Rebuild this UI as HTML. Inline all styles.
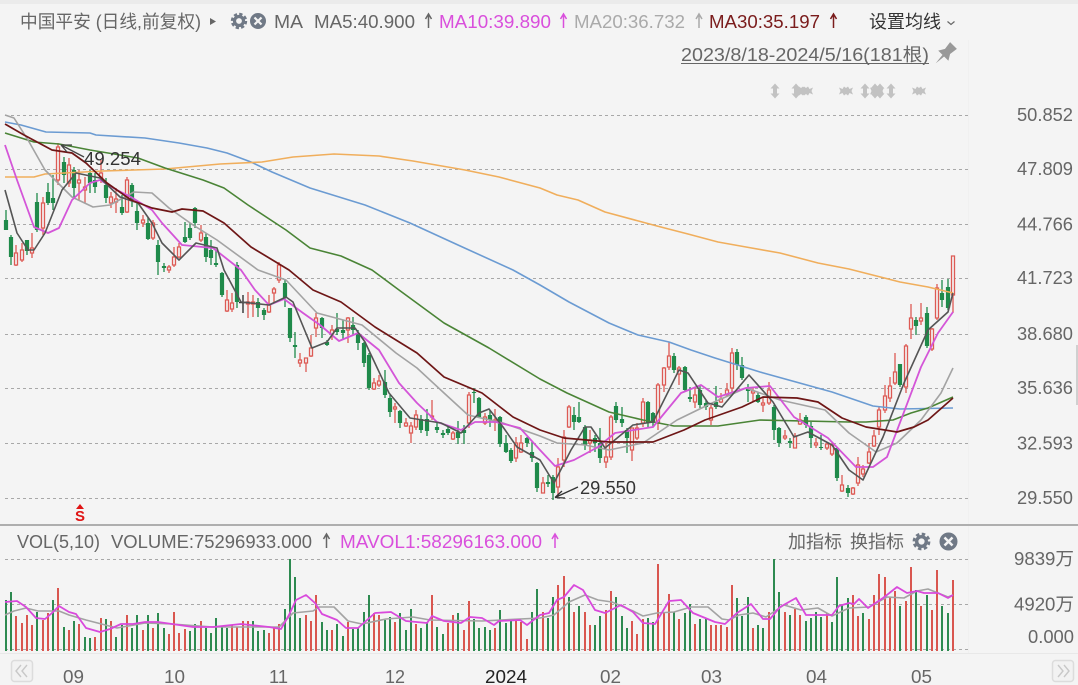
<!DOCTYPE html>
<html lang="zh">
<head>
<meta charset="utf-8">
<title>中国平安</title>
<style>
html,body{margin:0;padding:0;width:1078px;height:685px;overflow:hidden;background:#f4f4f4}
svg{display:block;filter:blur(.3px)}
text{font-family:"Liberation Sans","Noto Sans CJK SC",sans-serif;font-size:18px;fill:#666}
</style>
</head>
<body>
<svg width="1078" height="685" viewBox="0 0 1078 685" xmlns="http://www.w3.org/2000/svg">
<defs>
<path id="ar" d="M0-7.500L4.500-2.500H2V2.500H4.500L0 7.500L-4.500 2.500H-2V-2.500H-4.500Z" fill="#c2c2c2"/>
<path id="bg" d="M-7-3.500L-3.500-2L-2-4.500L0-3L2-4.500L3.500-2L7-3.500L5.500 0L7 3.500L3.500 2L2 4.500L0 3L-2 4.500L-3.500 2L-7 3.500L-5.500 0Z" fill="#c2c2c2"/>
</defs>
<rect width="1078" height="685" fill="#f4f4f4"/>
<rect width="1078" height="4" fill="#ebebeb"/>
<rect x="968" y="40" width="1" height="614" fill="#f0f0f0"/>
<rect y="653" width="1078" height="1" fill="#e8e8e8"/>
<rect y="524" width="1078" height="2" fill="#aeaeae"/>
<rect x="1076" y="345" width="2" height="60" fill="#d0d0d0"/>

<!-- grid -->
<path d="M5 115.500H968M5 169.500H968M5 224.500H968M5 278.500H968M5 334.500H968M5 388.500H968M5 443.500H968M5 498.500H968M5 559.500H968M5 604.500H968M5 649.500H968" stroke="#a8a8a8" stroke-width="1" stroke-dasharray="3 3" fill="none"/>

<!-- candles green -->
<path fill="none" stroke="#1f8a4a" stroke-width="1.300" d="M6 210V230M11 235V265M27 240V255M37 193V232M48 183V205M53 175V210M64 157V183M74 167V197M90 170V193M95 173V193M106 178V203M122 195V215M132 183V207M137 203V230M148 217V240M158 240V275M164 263V272M185 222V243M190 223V240M195 207V228M206 233V262M211 240V265M216 250V267M222 272V297M237 262V308M258 298V317M264 308V320M285 280V307M290 308V342M295 332V358M322 317V338M327 340V346M337 313V335M343 320V340M353 317V335M358 330V350M364 342V367M369 353V390M385 370V398M390 395V417M400 410V428M421 415V433M427 409V436M437 422V433M443 430V438M448 427V435M458 421V444M464 425V444M474 388V403M479 397V418M490 410V427M500 416V447M506 435V453M511 448V463M527 437V447M532 442V462M537 462V492M548 475V487M553 475V500M574 407V430M579 402V423M585 425V450M595 435V452M600 428V463M616 402V423M622 407V427M627 428V453M648 401V427M653 412V427M674 353V373M685 366V391M690 387V402M700 385V408M706 400V410M716 386V409M737 349V370M742 357V380M748 384V402M758 392V403M774 405V440M779 427V447M790 438V448M806 415V428M811 422V448M821 435V450M837 447V481M848 485V497M900 364V387M916 317V335M927 307V348M942 280V307M948 279V310"/>
<path fill="none" stroke="#1f8a4a" stroke-width="4.200" d="M6 220V230M11 237V257M27 240V251M37 202V230M48 192V203M53 198V203M64 162V175M74 170V188M90 173V183M95 180V187M106 185V198M122 207V213M132 185V200M137 211V223M148 223V239M158 245V262M164 266V268M185 237V242M190 228V238M195 208V223M206 237V257M211 250V258M216 263V265M222 273V295M237 265V302M258 302V308M264 310V315M285 283V298M290 308V338M295 345V347M322 318V328M327 342V345M337 329V332M343 330V333M353 325V330M358 333V343M364 343V363M369 355V388M385 382V395M390 398V412M400 411V423M421 419V430M427 419V431M437 427V430M443 433V435M448 429V433M458 432V438M464 430V433M474 392V393M479 398V417M490 415V420M500 417V444M506 443V452M511 450V461M527 438V443M532 452V458M537 463V488M548 482V484M553 477V493M574 415V422M579 417V422M585 427V445M595 438V443M600 443V458M616 406V420M622 419V423M627 430V438M648 402V423M653 413V423M674 356V370M685 367V390M690 397V399M700 390V405M706 403V407M716 402V407M737 352V365M742 365V378M748 388V391M758 395V402M774 407V430M779 428V443M790 441V443M806 417V425M811 426V438M821 447V448M837 448V478M848 488V493M900 364V385M916 320V326M927 313V346M942 293V300M948 287V308"/>

<!-- candles red -->
<path fill="none" stroke="#dd5a54" stroke-width="1.300" d="M16 245V266M22 243V262M32 233V258M43 197V235M58 143V185M69 158V187M79 170V200M85 177V203M101 160V183M111 192V208M116 188V213M127 177V213M143 215V227M153 220V240M169 265V273M174 247V267M179 243V258M201 225V242M227 290V312M232 293V312M248 292V318M253 295V317M269 295V313M274 287V303M279 262V283M300 353V367M306 358V372M311 335V357M316 313V337M332 325V340M348 317V343M374 378V390M379 375V387M395 403V423M406 418V427M411 422V443M416 410V430M432 400V420M453 431V440M469 392V428M485 413V425M495 409V431M516 437V462M521 435V453M543 477V493M558 458V497M564 430V467M569 405V428M590 430V453M606 443V468M611 415V460M632 428V461M637 423V440M643 398V427M658 383V430M664 367V392M669 342V370M679 366V385M695 388V408M711 405V425M721 393V403M727 383V397M732 348V395M753 387V402M763 398V412M769 382V405M785 430V440M795 433V448M800 413V425M816 438V448M827 442V450M832 443V456M842 475V492M853 487V495M858 457V486M863 465V477M869 443V464M874 430V447M879 407V435M885 385V413M890 377V402M895 353V385M906 344V393M911 304V339M921 303V325M932 328V351M937 284V320M953 256V313"/>
<path transform="translate(.5 0)" fill="#f4f4f4" stroke="#dd5a54" stroke-width="1.300" d="M14 253h3v12h-3zM20 250h3v10h-3zM30 248h3v5h-3zM41 203h3v25h-3zM56 147h3v33h-3zM67 165h3v18h-3zM77 180h3v3h-3zM83 187h3v3h-3zM99 173h3v5h-3zM109 197h3v6h-3zM114 199h3v3h-3zM125 180h3v32h-3zM141 220h3v3h-3zM151 223h3v15h-3zM167 267h3v3h-3zM172 257h3v8h-3zM177 247h3v10h-3zM199 233h3v7h-3zM225 300h3v11h-3zM230 303h3v6h-3zM246 302h3v2h-3zM251 302h3v2h-3zM267 305h3v7h-3zM272 289h3v4h-3zM277 265h3v15h-3zM298 360h3v3h-3zM304 358h3v5h-3zM309 348h3v8h-3zM314 318h3v10h-3zM330 330h3v4h-3zM346 318h3v12h-3zM372 383h3v6h-3zM377 381h3v4h-3zM393 407h3v2h-3zM404 423h3v3h-3zM409 426h3v7h-3zM414 415h3v12h-3zM430 416h3v1h-3zM451 433h3v6h-3zM467 395h3v28h-3zM483 417h3v6h-3zM493 420h3v2h-3zM514 443h3v15h-3zM519 443h3v9h-3zM541 483h3v10h-3zM556 467h3v20h-3zM562 437h3v23h-3zM567 407h3v20h-3zM588 440h3v3h-3zM604 457h3v5h-3zM609 417h3v40h-3zM630 428h3v22h-3zM635 428h3v10h-3zM641 402h3v21h-3zM656 385h3v38h-3zM662 368h3v17h-3zM667 356h3v11h-3zM677 368h3v6h-3zM693 395h3v7h-3zM709 408h3v12h-3zM719 399h3v3h-3zM725 390h3v5h-3zM730 353h3v35h-3zM751 391h3v2h-3zM761 403h3v2h-3zM767 390h3v13h-3zM783 436h3v2h-3zM793 436h3v12h-3zM798 420h3v4h-3zM814 443h3v2h-3zM825 444h3v4h-3zM830 445h3v9h-3zM840 485h3v6h-3zM851 488h3v6h-3zM856 465h3v18h-3zM861 469h3v5h-3zM867 452h3v11h-3zM872 436h3v10h-3zM877 410h3v17h-3zM883 396h3v14h-3zM888 386h3v12h-3zM893 372h3v11h-3zM904 346h3v41h-3zM909 318h3v11h-3zM919 318h3v3h-3zM930 329h3v20h-3zM935 288h3v30h-3zM951 256h3v39h-3z"/>
<path d="M239 302.500H249M243 295V313" stroke="#333" stroke-width="1.400" fill="none"/>

<!-- price MA lines -->
<g fill="none" stroke-width="1.600" stroke-linejoin="round">
<polyline stroke="#6b9bd2" points="5,122 21,125 46,132 90,133 96,135 145,138 179,143 207,148 227,153 251,162 272,172 310,188 365,205 410,223 458,245 513,270 540,285 569,302 609,323 638,335 669,342 691,350 715,358 760,372 832,392 873,406 900,409 953,408"/>
<polyline stroke="#f0ae5c" points="5,177 34,177 45,174 103,171 165,169 220,164 262,162 293,157 334,154 379,156 413,161 465,170 499,177 540,188 557,195 578,200 605,212 657,226 688,234 718,242 746,247 780,253 818,263 849,269 900,282 928,287 953,293"/>
<polyline stroke="#4a8436" points="5,133 34,142 59,144 90,150 138,158 165,168 203,180 224,188 248,205 286,230 310,248 341,256 372,270 399,290 444,323 489,348 540,379 567,393 609,412 643,420 674,426 718,426 760,420 849,422 866,422 893,420 911,413 928,408 953,397"/>
<polyline stroke="#a3a3a3" points="5,115 14,118 28,140 45,170 72,197 93,207 110,205 134,192 152,193 169,208 193,225 217,240 258,270 286,280 317,313 362,325 396,353 417,368 444,393 468,415 503,423 540,436 557,443 585,445 609,450 643,443 677,420 712,403 746,388 780,400 825,410 849,433 876,452 897,443 921,420 941,393 953,368"/>
<polyline stroke="#d455d8" stroke-width="1.800" points="5,145 17,180 34,227 48,233 59,228 72,200 90,183 100,180 117,190 131,197 152,210 162,223 182,245 213,248 241,270 255,290 269,305 284,299 303,313 320,325 339,341 358,333 379,350 399,383 417,403 437,422 461,430 475,422 496,422 520,428 540,450 555,466 574,460 598,447 615,433 653,427 681,393 701,385 718,397 746,388 770,386 794,417 828,438 856,467 873,467 887,457 921,367 938,333 953,312"/>
<polyline stroke="#555" points="5,190 17,233 28,250 34,250 45,233 62,190 76,173 100,178 120,197 138,203 152,223 162,243 179,260 196,243 217,248 224,270 241,302 269,305 286,297 293,302 312,348 327,342 337,328 355,328 365,342 389,393 410,418 441,423 461,433 479,413 489,409 503,427 517,447 540,460 554,483 571,450 585,427 591,427 605,448 633,425 653,422 679,370 688,373 708,403 722,407 749,375 773,402 794,437 808,432 832,445 849,470 863,480 883,437 904,383 928,330 948,312 953,293"/>
<polyline stroke="#6e1616" stroke-width="1.700" points="5,124 24,135 52,150 72,153 86,163 107,183 131,200 152,208 172,212 182,209 203,211 224,223 251,247 289,270 313,290 341,302 375,327 417,353 444,377 482,393 513,417 540,430 564,438 609,442 653,442 684,430 705,420 742,407 763,397 797,398 818,402 842,418 866,427 897,432 914,427 928,420 953,398"/>
</g>

<!-- annotations -->
<path d="M84 157L61 145M61 145L72 145M61 145L67 152" stroke="#444" stroke-width="1.300" fill="none"/>
<text x="84" y="165" textLength="57" lengthAdjust="spacingAndGlyphs" style="fill:#333">49.254</text>
<path d="M578 487L555 497.500M555 497.500L562 491M555 497.500L565 498" stroke="#333" stroke-width="1.300" fill="none"/>
<text x="580" y="494" textLength="56" lengthAdjust="spacingAndGlyphs" style="fill:#333">29.550</text>
<polygon points="80,504 84,509 76,509" fill="#e01414"/>
<text x="75" y="521" textLength="10" lengthAdjust="spacingAndGlyphs" style="fill:#e01414;font-size:15px;font-weight:bold">S</text>

<!-- volume bars -->
<path fill="none" stroke="#2d8a50" stroke-width="2" d="M6 600V651M11 592V651M37 612V651M53 600V651M64 627V651M74 621V651M85 637V651M90 638V651M106 619V651M116 637V651M122 625V651M132 628V651M137 615V651M148 615V651M158 613V651M164 628V651M190 631V651M195 624V651M206 628V651M211 633V651M216 618V651M222 627V651M227 628V651M253 621V651M258 631V651M264 630V651M285 609V651M290 559V651M295 577V651M300 618V651M322 622V651M327 630V651M337 624V651M343 636V651M353 629V651M358 628V651M364 612V651M369 595V651M385 620V651M390 617V651M400 613V651M406 630V651M411 609V651M421 628V651M427 622V651M437 627V651M443 634V651M458 613V651M474 619V651M479 628V651M485 627V651M490 630V651M500 610V651M506 623V651M511 619V651M532 612V651M537 589V651M548 618V651M553 597V651M569 597V651M579 606V651M595 625V651M600 616V651M616 597V651M622 616V651M627 628V651M648 618V651M653 622V651M674 612V651M685 613V651M690 604V651M700 619V651M706 618V651M737 598V651M742 616V651M748 597V651M758 625V651M763 628V651M774 559V651M779 592V651M790 615V651M806 621V651M811 618V651M816 612V651M821 617V651M832 622V651M837 577V651M842 605V651M848 598V651M863 613V651M900 606V651M916 590V651M927 595V651M942 606V651M948 613V651"/>
<path fill="none" stroke="#d9564f" stroke-width="2" d="M16 616V651M22 623V651M27 615V651M32 625V651M43 620V651M48 613V651M58 588V651M69 630V651M79 624V651M95 637V651M101 618V651M111 621V651M127 615V651M143 630V651M153 628V651M169 634V651M174 612V651M179 633V651M185 629V651M201 621V651M232 625V651M237 627V651M243 621V651M248 621V651M269 633V651M274 628V651M279 624V651M306 615V651M311 621V651M316 595V651M332 630V651M348 622V651M374 613V651M379 615V651M395 622V651M416 624V651M432 595V651M448 623V651M453 615V651M464 630V651M469 601V651M495 628V651M516 621V651M521 622V651M527 639V651M543 612V651M558 585V651M564 576V651M574 612V651M585 612V651M590 625V651M606 610V651M611 591V651M632 621V651M637 634V651M643 619V651M658 564V651M664 612V651M669 594V651M679 619V651M695 624V651M711 625V651M716 625V651M721 625V651M727 627V651M732 585V651M753 628V651M769 612V651M785 612V651M795 609V651M800 615V651M827 613V651M858 616V651M853 595V651M869 619V651M874 595V651M879 574V651M885 577V651M890 597V651M895 591V651M906 601V651M911 567V651M921 606V651M932 610V651M937 570V651M953 580V651"/>

<!-- volume MAs -->
<g fill="none" stroke-linejoin="round">
<polyline stroke="#a3a3a3" stroke-width="1.600" points="5,615 14,611 26,608 38,611 59,611 69,615 86,620 117,628 145,623 172,624 213,627 279,627 293,613 313,611 319,607 334,607 348,621 362,624 386,619 413,617 430,620 482,621 540,618 554,615 569,602 585,595 598,600 612,602 633,611 643,616 657,613 674,612 691,607 708,607 722,619 729,620 739,615 753,613 766,617 784,605 801,610 818,608 832,616 849,608 869,607 887,597 904,598 917,591 928,589 948,597 953,595"/>
<polyline stroke="#d949dc" stroke-width="1.800" points="5,602 17,601 26,607 36,618 45,619 52,613 59,606 69,612 76,614 86,628 100,632 110,629 121,624 133,624 145,622 158,622 172,624 193,627 213,627 241,624 269,627 281,629 289,615 296,600 306,595 315,603 322,614 337,620 346,628 358,628 375,613 391,612 406,621 427,623 432,616 444,621 461,623 470,617 482,618 494,625 499,621 520,620 527,625 540,615 549,613 557,600 564,597 574,585 583,590 595,610 605,613 621,605 633,612 643,623 655,624 669,601 681,600 693,613 715,622 725,624 737,613 751,604 763,619 770,619 780,607 796,598 806,615 832,615 839,606 849,603 854,604 859,599 868,608 883,598 897,587 907,593 917,591 924,593 938,593 948,598 953,595"/>
</g>

<!-- header text -->
<text x="20" y="28" textLength="181" lengthAdjust="spacingAndGlyphs">中国平安 (日线,前复权)</text>
<polygon points="210,18 216,21.500 210,25" fill="#666"/>
<g fill="#707986">
<circle cx="239" cy="21" r="4.500" fill="none" stroke="#707986" stroke-width="3.200"/>
<circle cx="239" cy="21" r="7" fill="none" stroke="#707986" stroke-width="2.400" stroke-dasharray="3.300 2.200"/>
<circle cx="258" cy="21" r="8"/>
</g>
<path d="M254.500 17.500L261.500 24.500M261.500 17.500L254.500 24.500" stroke="#f4f4f4" stroke-width="2.200"/>
<text x="274" y="28" textLength="29" lengthAdjust="spacingAndGlyphs">MA</text>
<text x="314" y="28" textLength="101" lengthAdjust="spacingAndGlyphs">MA5:40.900</text>
<path d="M428.500 28V15M425.500 19L428.500 14L431.500 19" stroke="#666" stroke-width="1.500" fill="none"/>
<text x="439" y="28" textLength="112" lengthAdjust="spacingAndGlyphs" style="fill:#d94fdc">MA10:39.890</text>
<path d="M563.500 28V15M560.500 19L563.500 14L566.500 19" stroke="#d94fdc" stroke-width="1.500" fill="none"/>
<text x="574" y="28" textLength="111" lengthAdjust="spacingAndGlyphs" style="fill:#aaa">MA20:36.732</text>
<path d="M699 28V15M696 19L699 14L702 19" stroke="#aaa" stroke-width="1.500" fill="none"/>
<text x="709" y="28" textLength="111" lengthAdjust="spacingAndGlyphs" style="fill:#7a1c1c">MA30:35.197</text>
<path d="M833.500 28V15M830.500 19L833.500 14L836.500 19" stroke="#7a1c1c" stroke-width="1.500" fill="none"/>
<text x="869" y="28" textLength="72" lengthAdjust="spacingAndGlyphs" style="fill:#333">设置均线</text>
<path d="M947.500 21.500L951 24.500L954.500 21.500" stroke="#666" stroke-width="1.200" fill="none"/>

<text x="681" y="61" textLength="248" lengthAdjust="spacingAndGlyphs">2023/8/18-2024/5/16(181根)</text>
<rect x="681" y="63" width="248" height="1" fill="#666"/>
<g transform="translate(945,54) rotate(45) scale(1.200)"><path d="M-4-10H4L3-3L6 2H-6L-3-3ZM-1 2L0 11L1 2Z" fill="#999"/></g>

<!-- marker glyphs -->
<use href="#ar" x="775" y="91"/>
<use href="#ar" x="796" y="91"/>
<use href="#bg" x="801" y="91"/>
<use href="#bg" x="806" y="91"/>
<use href="#bg" x="846" y="91"/>
<use href="#ar" x="865" y="91"/>
<use href="#bg" x="877" y="91"/>
<use href="#ar" x="875" y="91"/>
<use href="#ar" x="880" y="91"/>
<use href="#ar" x="891" y="91"/>
<use href="#bg" x="919" y="91"/>

<!-- price axis -->
<text x="1017" y="121" textLength="56" lengthAdjust="spacingAndGlyphs">50.852</text>
<text x="1017" y="175" textLength="56" lengthAdjust="spacingAndGlyphs">47.809</text>
<text x="1017" y="230.500" textLength="56" lengthAdjust="spacingAndGlyphs">44.766</text>
<text x="1017" y="284" textLength="56" lengthAdjust="spacingAndGlyphs">41.723</text>
<text x="1017" y="340" textLength="56" lengthAdjust="spacingAndGlyphs">38.680</text>
<text x="1017" y="394" textLength="56" lengthAdjust="spacingAndGlyphs">35.636</text>
<text x="1017" y="449.500" textLength="56" lengthAdjust="spacingAndGlyphs">32.593</text>
<text x="1017" y="504" textLength="56" lengthAdjust="spacingAndGlyphs">29.550</text>

<!-- volume header -->
<text x="17" y="548" textLength="83" lengthAdjust="spacingAndGlyphs">VOL(5,10)</text>
<text x="111" y="548" textLength="201" lengthAdjust="spacingAndGlyphs">VOLUME:75296933.000</text>
<path d="M326.500 548V535M323.500 539L326.500 534L329.500 539" stroke="#666" stroke-width="1.500" fill="none"/>
<text x="340" y="548" textLength="202" lengthAdjust="spacingAndGlyphs" style="fill:#d94fdc">MAVOL1:58296163.000</text>
<path d="M555 548V535M552 539L555 534L558 539" stroke="#d94fdc" stroke-width="1.500" fill="none"/>
<text x="788" y="548" textLength="54" lengthAdjust="spacingAndGlyphs">加指标</text>
<text x="850" y="548" textLength="54" lengthAdjust="spacingAndGlyphs">换指标</text>
<circle cx="921.500" cy="541.500" r="4.800" fill="none" stroke="#707986" stroke-width="3.400"/>
<circle cx="921.500" cy="541.500" r="7.600" fill="none" stroke="#707986" stroke-width="2.600" stroke-dasharray="3.500 2.470"/>
<circle cx="948.500" cy="541.500" r="9" fill="#707986"/>
<path d="M944.500 537.500L952.500 545.500M952.500 537.500L944.500 545.500" stroke="#f4f4f4" stroke-width="2.500"/>

<text x="1014" y="565" textLength="60" lengthAdjust="spacingAndGlyphs">9839万</text>
<text x="1014" y="610.500" textLength="60" lengthAdjust="spacingAndGlyphs">4920万</text>
<text x="1028" y="643" textLength="46" lengthAdjust="spacingAndGlyphs">0.000</text>

<!-- x axis -->
<text x="63" y="683" textLength="21" lengthAdjust="spacingAndGlyphs">09</text>
<text x="164" y="683" textLength="21" lengthAdjust="spacingAndGlyphs">10</text>
<text x="269" y="683" textLength="19" lengthAdjust="spacingAndGlyphs">11</text>
<text x="385" y="683" textLength="20" lengthAdjust="spacingAndGlyphs">12</text>
<text x="485" y="683" textLength="42" lengthAdjust="spacingAndGlyphs" style="fill:#222">2024</text>
<text x="600" y="683" textLength="21" lengthAdjust="spacingAndGlyphs">02</text>
<text x="701" y="683" textLength="21" lengthAdjust="spacingAndGlyphs">03</text>
<text x="806" y="683" textLength="21" lengthAdjust="spacingAndGlyphs">04</text>
<text x="911" y="683" textLength="21" lengthAdjust="spacingAndGlyphs">05</text>

<!-- scroll buttons -->
<rect x="11.500" y="660.500" width="21" height="21" rx="3" fill="#f2f2f2" stroke="#dcdcdc" stroke-width="1.500"/>
<path d="M21 665L16 671L21 677M27 665L22 671L27 677" stroke="#c8c8c8" stroke-width="1.400" fill="none"/>
<rect x="1052.500" y="660.500" width="21" height="21" rx="3" fill="#f2f2f2" stroke="#dcdcdc" stroke-width="1.500"/>
<path d="M1058 665L1063 671L1058 677M1064 665L1069 671L1064 677" stroke="#c8c8c8" stroke-width="1.400" fill="none"/>
</svg>
</body>
</html>
